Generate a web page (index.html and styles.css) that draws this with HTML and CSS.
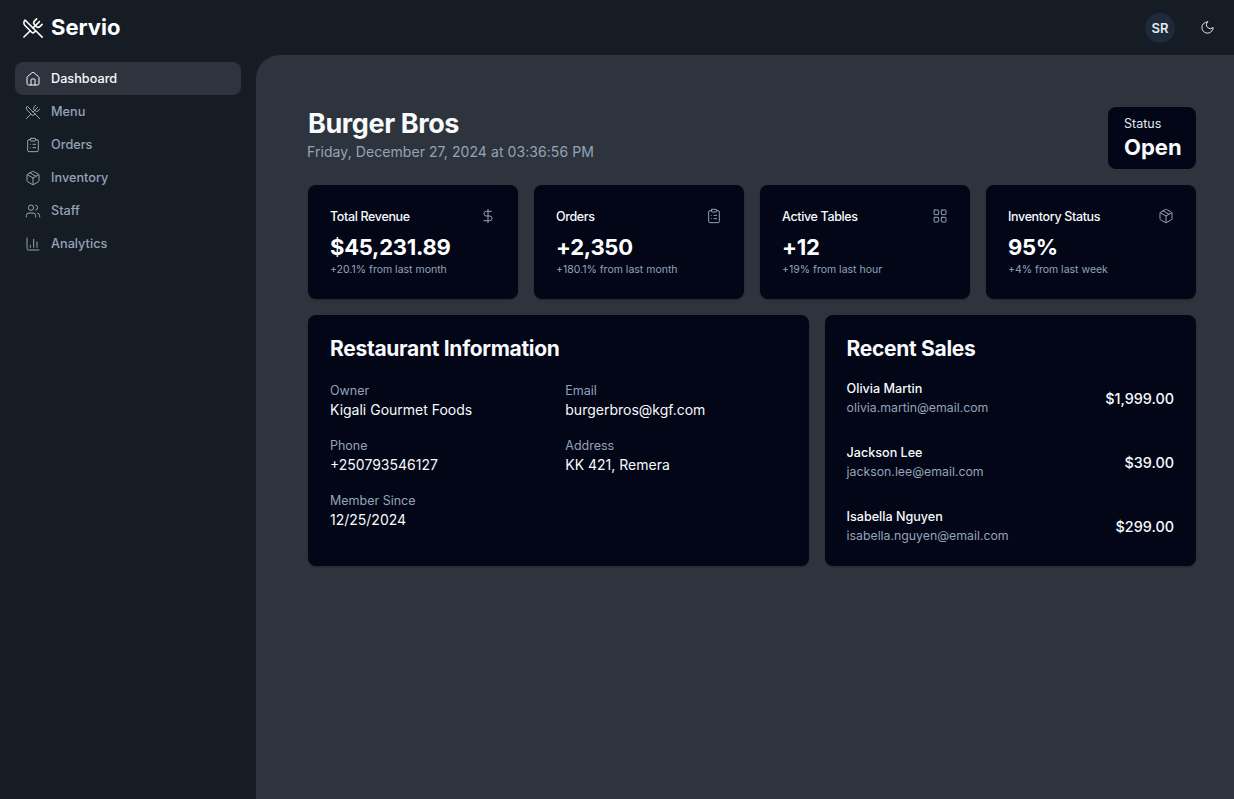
FILE: index.html
```html
<!DOCTYPE html>
<html lang="en">
<head>
    <meta charset="UTF-8">
    <title>Servio - Dashboard</title>
    <link rel="stylesheet" href="styles.css">
</head>
<body>
    <!-- Icon set -->
    <svg class="icon-defs" aria-hidden="true">
        <symbol id="i-utensils" viewBox="0 0 24 24"><path d="m16 2-2.3 2.3a3 3 0 0 0 0 4.2l1.8 1.8a3 3 0 0 0 4.2 0L22 8"/><path d="M15 15 3.3 3.3a4.2 4.2 0 0 0 0 6l7.3 7.3c.7.7 2 .7 2.8 0L15 15Zm0 0 7 7"/><path d="m2.1 21.8 6.4-6.3"/><path d="m19 5-7 7"/></symbol>
        <symbol id="i-home" viewBox="0 0 24 24"><path d="M15 21v-8a1 1 0 0 0-1-1h-4a1 1 0 0 0-1 1v8"/><path d="M3 10a2 2 0 0 1 .709-1.528l7-5.999a2 2 0 0 1 2.582 0l7 5.999A2 2 0 0 1 21 10v9a2 2 0 0 1-2 2H5a2 2 0 0 1-2-2z"/></symbol>
        <symbol id="i-clipboard" viewBox="0 0 24 24"><rect width="8" height="4" x="8" y="2" rx="1" ry="1"/><path d="M16 4h2a2 2 0 0 1 2 2v14a2 2 0 0 1-2 2H6a2 2 0 0 1-2-2V6a2 2 0 0 1 2-2h2"/><path d="M12 11h4"/><path d="M12 16h4"/><path d="M8 11h.01"/><path d="M8 16h.01"/></symbol>
        <symbol id="i-package" viewBox="0 0 24 24"><path d="M21 8a2 2 0 0 0-1-1.73l-7-4a2 2 0 0 0-2 0l-7 4A2 2 0 0 0 3 8v8a2 2 0 0 0 1 1.73l7 4a2 2 0 0 0 2 0l7-4A2 2 0 0 0 21 16Z"/><path d="m3.3 7 8.7 5 8.7-5"/><path d="M12 22V12"/><path d="m7.5 4.27 9 5.15"/></symbol>
        <symbol id="i-users" viewBox="0 0 24 24"><path d="M16 21v-2a4 4 0 0 0-4-4H6a4 4 0 0 0-4 4v2"/><circle cx="9" cy="7" r="4"/><path d="M22 21v-2a4 4 0 0 0-3-3.87"/><path d="M16 3.13a4 4 0 0 1 0 7.75"/></symbol>
        <symbol id="i-chart" viewBox="0 0 24 24"><path d="M3 3v16a2 2 0 0 0 2 2h16"/><path d="M18 17V9"/><path d="M13 17V5"/><path d="M8 17v-3"/></symbol>
        <symbol id="i-dollar" viewBox="0 0 24 24"><line x1="12" x2="12" y1="2" y2="22"/><path d="M17 5H9.5a3.5 3.5 0 0 0 0 7h5a3.5 3.5 0 0 1 0 7H6"/></symbol>
        <symbol id="i-grid" viewBox="0 0 24 24"><rect width="7" height="7" x="3" y="3" rx="1"/><rect width="7" height="7" x="14" y="3" rx="1"/><rect width="7" height="7" x="14" y="14" rx="1"/><rect width="7" height="7" x="3" y="14" rx="1"/></symbol>
        <symbol id="i-moon" viewBox="0 0 24 24"><path d="M12 3a6 6 0 0 0 9 9 9 9 0 1 1-9-9Z"/></symbol>
    </svg>

    <div class="app">
        <!-- Sidebar -->
        <aside class="sidebar">
            <div class="brand">
                <svg class="icon brand-icon"><use href="#i-utensils"/></svg>
                <span class="brand-name">Servio</span>
            </div>
            <nav class="nav">
                <a class="nav-item active"><svg class="icon"><use href="#i-home"/></svg>Dashboard</a>
                <a class="nav-item"><svg class="icon"><use href="#i-utensils"/></svg>Menu</a>
                <a class="nav-item"><svg class="icon"><use href="#i-clipboard"/></svg>Orders</a>
                <a class="nav-item"><svg class="icon"><use href="#i-package"/></svg>Inventory</a>
                <a class="nav-item"><svg class="icon"><use href="#i-users"/></svg>Staff</a>
                <a class="nav-item"><svg class="icon"><use href="#i-chart"/></svg>Analytics</a>
            </nav>
        </aside>

        <div class="right">
            <!-- Top bar -->
            <header class="topbar">
                <div class="avatar">SR</div>
                <svg class="icon theme-icon"><use href="#i-moon"/></svg>
            </header>

            <main class="main">
                <div class="page-head">
                    <div>
                        <h1 class="page-title">Burger Bros</h1>
                        <p class="page-date">Friday, December 27, 2024 at 03:36:56 PM</p>
                    </div>
                    <div class="status">
                        <div class="status-label">Status</div>
                        <div class="status-value">Open</div>
                    </div>
                </div>

                <!-- Stat cards -->
                <section class="stats">
                    <div class="card stat">
                        <div class="stat-top"><span class="stat-label">Total Revenue</span><svg class="icon"><use href="#i-dollar"/></svg></div>
                        <div class="stat-value">$45,231.89</div>
                        <div class="stat-note">+20.1% from last month</div>
                    </div>
                    <div class="card stat">
                        <div class="stat-top"><span class="stat-label">Orders</span><svg class="icon"><use href="#i-clipboard"/></svg></div>
                        <div class="stat-value">+2,350</div>
                        <div class="stat-note">+180.1% from last month</div>
                    </div>
                    <div class="card stat">
                        <div class="stat-top"><span class="stat-label">Active Tables</span><svg class="icon"><use href="#i-grid"/></svg></div>
                        <div class="stat-value">+12</div>
                        <div class="stat-note">+19% from last hour</div>
                    </div>
                    <div class="card stat">
                        <div class="stat-top"><span class="stat-label">Inventory Status</span><svg class="icon"><use href="#i-package"/></svg></div>
                        <div class="stat-value">95%</div>
                        <div class="stat-note">+4% from last week</div>
                    </div>
                </section>

                <section class="panels">
                    <div class="card panel info-panel">
                        <h2 class="panel-title">Restaurant Information</h2>
                        <div class="info-grid">
                            <div><div class="info-label">Owner</div><div class="info-value">Kigali Gourmet Foods</div></div>
                            <div><div class="info-label">Email</div><div class="info-value">burgerbros@kgf.com</div></div>
                            <div><div class="info-label">Phone</div><div class="info-value">+250793546127</div></div>
                            <div><div class="info-label">Address</div><div class="info-value">KK 421, Remera</div></div>
                            <div><div class="info-label">Member Since</div><div class="info-value">12/25/2024</div></div>
                        </div>
                    </div>
                    <div class="card panel sales-panel">
                        <h2 class="panel-title">Recent Sales</h2>
                        <div class="sales">
                            <div class="sale">
                                <div><div class="sale-name">Olivia Martin</div><div class="sale-email">olivia.martin@email.com</div></div>
                                <div class="sale-amount">$1,999.00</div>
                            </div>
                            <div class="sale">
                                <div><div class="sale-name">Jackson Lee</div><div class="sale-email">jackson.lee@email.com</div></div>
                                <div class="sale-amount">$39.00</div>
                            </div>
                            <div class="sale">
                                <div><div class="sale-name">Isabella Nguyen</div><div class="sale-email">isabella.nguyen@email.com</div></div>
                                <div class="sale-amount">$299.00</div>
                            </div>
                        </div>
                    </div>
                </section>
            </main>
        </div>
    </div>
</body>
</html>
```
FILE: styles.css
```css
* {
    box-sizing: border-box;
}

html, body {
    height: 100%;
}

body {
    margin: 0;
    font-family: Inter, "Liberation Sans", sans-serif;
    background-color: #161c24;
    color: #f8fafc;
    overflow: hidden;
}

.icon-defs {
    display: none;
}

.icon {
    width: 16px;
    height: 16px;
    flex-shrink: 0;
    fill: none;
    stroke: currentColor;
    stroke-width: 1.5;
    stroke-linecap: round;
    stroke-linejoin: round;
}

.app {
    display: flex;
    height: 100%;
}

/* Sidebar */
.sidebar {
    width: 256px;
    flex-shrink: 0;
    padding: 0 15px;
}

.brand {
    display: flex;
    align-items: center;
    gap: 7px;
    height: 55px;
    padding-left: 7px;
}

.brand-icon {
    width: 22px;
    height: 22px;
    color: #ffffff;
    stroke-width: 1.75;
}

.brand-name {
    font-size: 22px;
    line-height: 26px;
    font-weight: 700;
    color: #ffffff;
    margin-bottom: 2px;
}

.nav {
    display: flex;
    flex-direction: column;
    margin-top: 7px;
    width: 226px;
}

.nav-item {
    display: flex;
    align-items: center;
    gap: 10px;
    height: 33px;
    padding: 0 0 1px 10px;
    border-radius: 8px;
    font-size: 12.7px;
    font-weight: 500;
    color: #94a3b8;
}

.nav-item .icon {
    margin-top: 1px;
}

.nav-item.active {
    background-color: #2e343d;
    color: #f8fafc;
}

/* Right side */
.right {
    flex: 1;
    display: flex;
    flex-direction: column;
    min-width: 0;
}

.topbar {
    height: 55px;
    flex-shrink: 0;
    display: flex;
    align-items: center;
    justify-content: flex-end;
    padding-right: 19px;
}

.avatar {
    width: 30px;
    height: 30px;
    border-radius: 50%;
    background-color: #1e293b;
    display: flex;
    align-items: center;
    justify-content: center;
    font-size: 13px;
    font-weight: 600;
    color: #e2e8f0;
    margin-right: 25px;
}

.theme-icon {
    width: 15px;
    height: 15px;
    color: #f1f5f9;
}

.main {
    flex: 1;
    background-color: #2e343d;
    border-top-left-radius: 24px;
    padding: 52px 38px 0 52px;
}

.page-head {
    display: flex;
    justify-content: space-between;
    align-items: flex-start;
    margin-bottom: 16px;
}

.page-title {
    margin: 0;
    padding-top: 1px;
    font-size: 27px;
    line-height: 32px;
    font-weight: 700;
    letter-spacing: -0.4px;
    color: #f8fafc;
}

.page-date {
    margin: 2px 0 0 -1px;
    font-size: 14px;
    line-height: 20px;
    letter-spacing: 0.07px;
    color: #94a3b8;
}

.status {
    width: 88px;
    height: 62px;
    padding: 9px 16px;
    border-radius: 8px;
    background-color: #020617;
}

.status-label {
    font-size: 12.5px;
    line-height: 16px;
    color: #e2e8f0;
}

.status-value {
    font-size: 22px;
    line-height: 30px;
    font-weight: 700;
    color: #f8fafc;
}

.card {
    background-color: #020617;
    border-radius: 8px;
    box-shadow: 0 1px 2px rgba(0, 0, 0, 0.25);
}

.stats {
    display: grid;
    grid-template-columns: repeat(4, 1fr);
    gap: 16px;
    margin-bottom: 16px;
}

.stat {
    height: 114px;
    padding: 22px;
}

.stat-top {
    display: flex;
    justify-content: space-between;
    align-items: center;
    height: 18px;
    color: #94a3b8;
    margin-bottom: 7px;
}

.stat-label {
    font-size: 12.5px;
    font-weight: 500;
    letter-spacing: -0.35px;
    color: #f8fafc;
}

.stat-value {
    font-size: 22px;
    line-height: 30px;
    font-weight: 700;
    letter-spacing: -0.25px;
    color: #ffffff;
}

.stat-note {
    margin-top: 1px;
    font-size: 10.5px;
    line-height: 14px;
    color: #94a3b8;
}

.panels {
    display: grid;
    grid-template-columns: repeat(7, 1fr);
    gap: 16px;
}

.info-panel {
    grid-column: span 4;
}

.sales-panel {
    grid-column: span 3;
}

.panel {
    height: 251px;
    padding: 21px 22px;
}

.panel-title {
    margin: 0;
    font-size: 21px;
    line-height: 26px;
    font-weight: 700;
    letter-spacing: -0.3px;
    color: #f8fafc;
}

.info-grid {
    display: grid;
    grid-template-columns: 1fr 1fr;
    row-gap: 18px;
    column-gap: 14px;
    margin-top: 21px;
}

.info-label {
    font-size: 12.5px;
    line-height: 16px;
    color: #94a3b8;
}

.info-value {
    margin-top: 1px;
    font-size: 14px;
    line-height: 20px;
    color: #f8fafc;
}

.sales {
    display: flex;
    flex-direction: column;
    gap: 24px;
    margin-top: 16px;
}

.sale {
    display: flex;
    justify-content: space-between;
    align-items: center;
    height: 40px;
}

.sale-name {
    font-size: 12.6px;
    line-height: 20px;
    font-weight: 500;
    color: #f8fafc;
}

.sale-email {
    font-size: 12.3px;
    line-height: 18px;
    color: #94a3b8;
}

.sale-amount {
    font-size: 14.4px;
    font-weight: 500;
    color: #f8fafc;
}
```
